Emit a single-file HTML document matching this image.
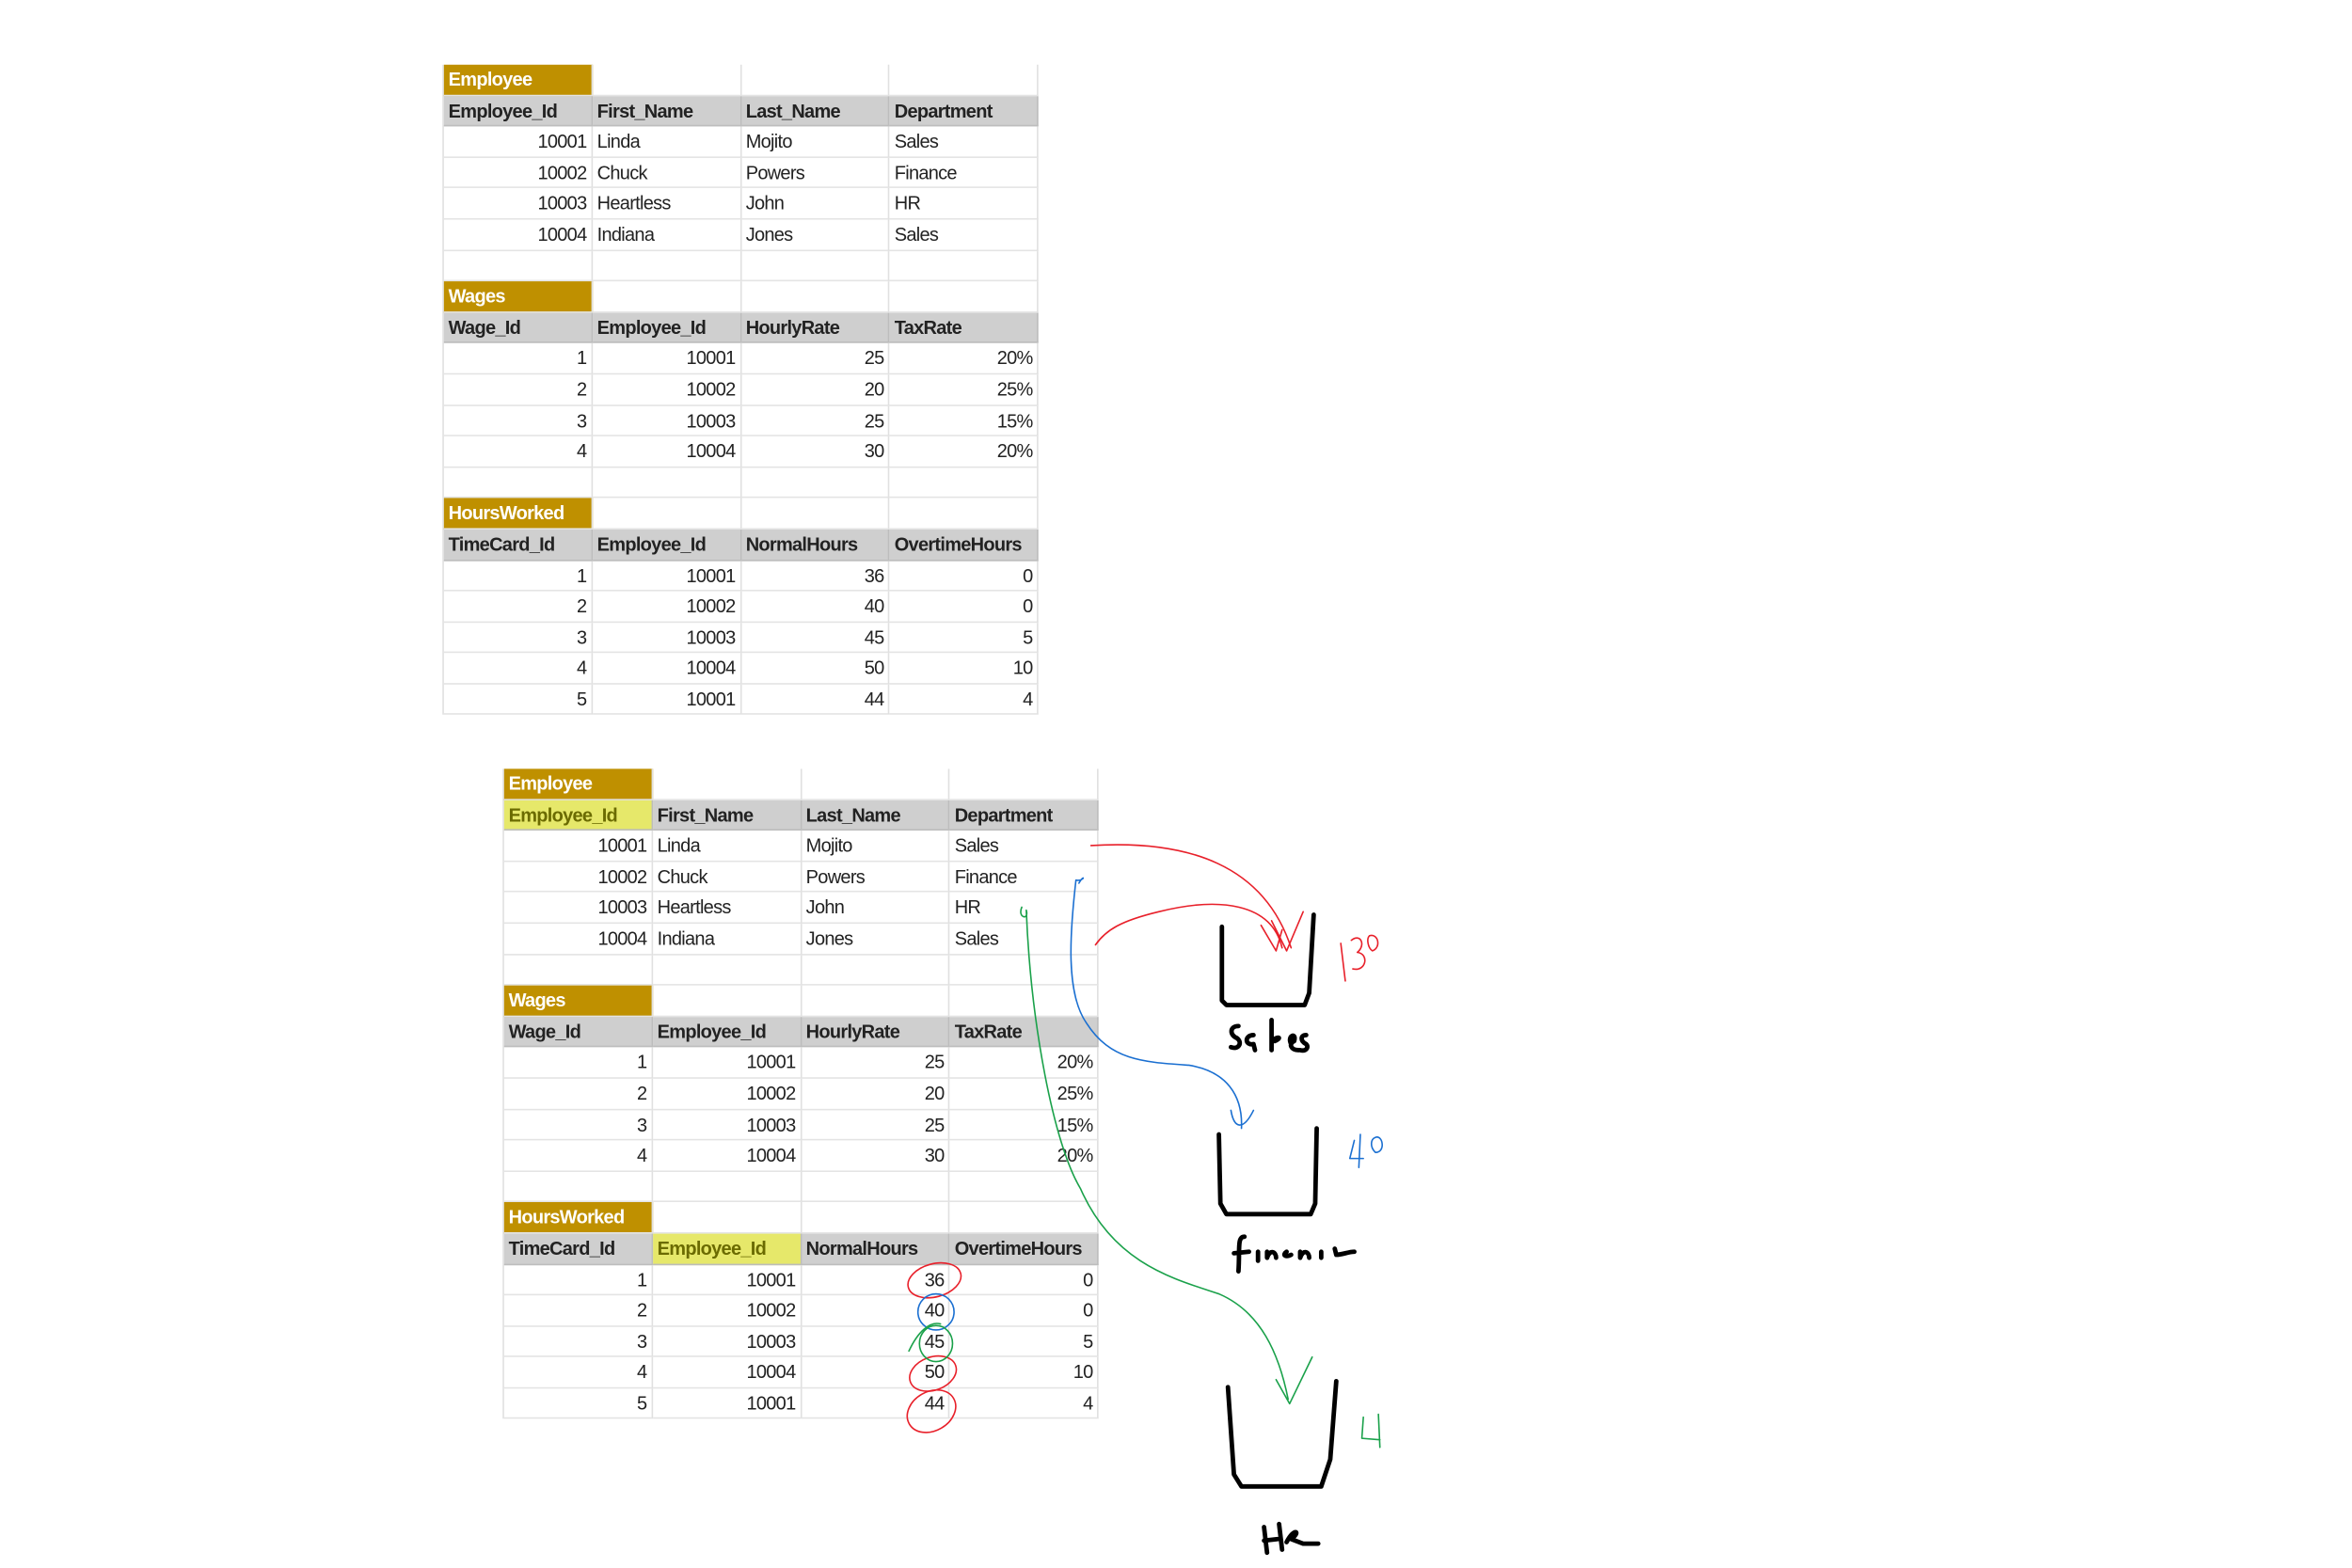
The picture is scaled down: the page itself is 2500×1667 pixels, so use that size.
<!DOCTYPE html>
<html><head><meta charset="utf-8"><style>
html,body{margin:0;padding:0;background:#fff;}
body{width:2500px;height:1667px;overflow:hidden;position:relative;}
#w{position:absolute;left:0;top:0;width:1563px;height:1042px;transform:scale(1.5995);transform-origin:0 0;}
.t{position:absolute;display:grid;grid-template-columns:repeat(4,98.8px);grid-auto-rows:20.6px;font-family:"Liberation Sans",Arial,sans-serif;font-size:12.5px;letter-spacing:-0.45px;color:#222;border-left:1px solid #e0e0e0;}
.t div{box-sizing:border-box;border-right:1px solid #e0e0e0;border-bottom:1px solid #e4e4e4;padding:0 3px;line-height:20px;white-space:nowrap;overflow:hidden;}
.t .g{background:#bf9000;color:#fff;font-weight:bold;}
.t .h{background:#cfcfcf;font-weight:bold;border-bottom:1px solid #bdbdbd;border-right:1px solid #bdbdbd;}
.t .r{text-align:right;}
.t .y{background:#e6e86a;color:#6b6b00;}
</style></head><body><div id="w">

<div class="t" style="left:294px;top:43px;">
<div class="g">Employee</div><div></div><div></div><div></div>
<div class="h">Employee_Id</div><div class="h">First_Name</div><div class="h">Last_Name</div><div class="h">Department</div>
<div class="r">10001</div><div>Linda</div><div>Mojito</div><div>Sales</div>
<div class="r">10002</div><div>Chuck</div><div>Powers</div><div>Finance</div>
<div class="r">10003</div><div>Heartless</div><div>John</div><div>HR</div>
<div class="r">10004</div><div>Indiana</div><div>Jones</div><div>Sales</div>
<div></div><div></div><div></div><div></div>
<div class="g">Wages</div><div></div><div></div><div></div>
<div class="h">Wage_Id</div><div class="h">Employee_Id</div><div class="h">HourlyRate</div><div class="h">TaxRate</div>
<div class="r">1</div><div class="r">10001</div><div class="r">25</div><div class="r">20%</div>
<div class="r">2</div><div class="r">10002</div><div class="r">20</div><div class="r">25%</div>
<div class="r">3</div><div class="r">10003</div><div class="r">25</div><div class="r">15%</div>
<div class="r">4</div><div class="r">10004</div><div class="r">30</div><div class="r">20%</div>
<div></div><div></div><div></div><div></div>
<div class="g">HoursWorked</div><div></div><div></div><div></div>
<div class="h">TimeCard_Id</div><div class="h">Employee_Id</div><div class="h">NormalHours</div><div class="h">OvertimeHours</div>
<div class="r">1</div><div class="r">10001</div><div class="r">36</div><div class="r">0</div>
<div class="r">2</div><div class="r">10002</div><div class="r">40</div><div class="r">0</div>
<div class="r">3</div><div class="r">10003</div><div class="r">45</div><div class="r">5</div>
<div class="r">4</div><div class="r">10004</div><div class="r">50</div><div class="r">10</div>
<div class="r">5</div><div class="r">10001</div><div class="r">44</div><div class="r">4</div>
</div>

<div class="t" style="left:334px;top:511px;">
<div class="g">Employee</div><div></div><div></div><div></div>
<div class="h y">Employee_Id</div><div class="h">First_Name</div><div class="h">Last_Name</div><div class="h">Department</div>
<div class="r">10001</div><div>Linda</div><div>Mojito</div><div>Sales</div>
<div class="r">10002</div><div>Chuck</div><div>Powers</div><div>Finance</div>
<div class="r">10003</div><div>Heartless</div><div>John</div><div>HR</div>
<div class="r">10004</div><div>Indiana</div><div>Jones</div><div>Sales</div>
<div></div><div></div><div></div><div></div>
<div class="g">Wages</div><div></div><div></div><div></div>
<div class="h">Wage_Id</div><div class="h">Employee_Id</div><div class="h">HourlyRate</div><div class="h">TaxRate</div>
<div class="r">1</div><div class="r">10001</div><div class="r">25</div><div class="r">20%</div>
<div class="r">2</div><div class="r">10002</div><div class="r">20</div><div class="r">25%</div>
<div class="r">3</div><div class="r">10003</div><div class="r">25</div><div class="r">15%</div>
<div class="r">4</div><div class="r">10004</div><div class="r">30</div><div class="r">20%</div>
<div></div><div></div><div></div><div></div>
<div class="g">HoursWorked</div><div></div><div></div><div></div>
<div class="h">TimeCard_Id</div><div class="h y">Employee_Id</div><div class="h">NormalHours</div><div class="h">OvertimeHours</div>
<div class="r">1</div><div class="r">10001</div><div class="r">36</div><div class="r">0</div>
<div class="r">2</div><div class="r">10002</div><div class="r">40</div><div class="r">0</div>
<div class="r">3</div><div class="r">10003</div><div class="r">45</div><div class="r">5</div>
<div class="r">4</div><div class="r">10004</div><div class="r">50</div><div class="r">10</div>
<div class="r">5</div><div class="r">10001</div><div class="r">44</div><div class="r">4</div>
</div>

<svg width="1563" height="1042" style="position:absolute;left:0;top:0" fill="none" stroke-linecap="round" stroke-linejoin="round">
<g stroke="#e8202a" stroke-width="1">
<path d="M725,562 C790,558 840,575 858,630"/>
<path d="M845,612 L855,632 L866,606"/>
<path d="M728,628 C735,618 745,612 770,606 C810,596 845,600 852,630"/>
<path d="M838,615 L848,632 L852,618"/>
<ellipse cx="621" cy="851" rx="18" ry="11" transform="rotate(-15 621 851)"/>
<ellipse cx="620" cy="913" rx="16" ry="11" transform="rotate(-20 620 913)"/>
<ellipse cx="619" cy="938" rx="17" ry="13" transform="rotate(-30 619 938)"/>
<path d="M891,627 L894,652"/><path d="M898,625 C904,620 908,628 902,633 C910,634 908,646 899,644"/><path d="M910,622 C916,620 918,630 912,632 C909,630 908,624 910,622"/>
</g>
<g stroke="#1a6fd1" stroke-width="1">
<path d="M717,587 C721,580 721,586 715,585 C711,620 708,660 722,680 C738,705 760,706 790,708 C815,712 826,728 825,750"/>
<path d="M818,738 C820,750 826,752 833,738"/>
<ellipse cx="622" cy="872" rx="12" ry="12"/>
<path d="M900,758 L897,770 L906,770 M904,754 L903,776"/><path d="M914,756 C919,754 921,766 914,766 C910,762 911,757 914,756"/>
</g>
<g stroke="#1aa14a" stroke-width="1">
<path d="M679,603 C676,610 684,612 682,605 C685,680 700,760 718,790 C740,840 780,850 810,860 C838,872 850,900 856,930"/>
<path d="M848,917 L857,933 L872,902"/>
<ellipse cx="622" cy="893" rx="11" ry="12"/>
<path d="M604,898 C610,885 618,878 625,880"/>
<path d="M906,942 L905,956 L917,957 M916,940 L917,962"/>
</g>
<g stroke="#000" stroke-width="3">
<path d="M812,616 L812,665 L815,668 L867,668 L870,660 L873,608"/>
<path d="M810,754 L811,800 L815,807 L871,807 L874,800 L875,750"/>
<path d="M816,922 L820,980 L825,988 L878,988 L884,970 L888,918"/>
<path d="M823,682 C817,682 817,688 822,690 C826,693 823,698 818,696"/>
<path d="M833,688 C827,688 827,695 833,694 L834,698"/>
<path d="M845,678 L845,698 M845,692 C850,688 852,690 847,692"/>
<path d="M858,694 C855,688 862,686 860,692 C856,694 858,698 863,698"/>
<path d="M868,688 C864,688 864,692 868,694 C870,696 868,699 864,698"/>
<path d="M827,822 C822,822 824,830 823,845 M820,833 L830,832"/>
<path d="M836,832 L836,838 M842,832 L842,836 C844,830 848,832 848,836 M855,832 C852,834 854,836 858,834 M864,832 L864,836 C866,830 870,832 870,836 M878,832 L878,836 M887,830 L888,834 C892,834 896,832 900,832"/>
<path d="M840,1015 L842,1032 M840,1024 L849,1023 M850,1013 L852,1030 M855,1025 C860,1015 865,1018 858,1023 L866,1026 L876,1026"/>
</g>
</svg>
</div></body></html>
